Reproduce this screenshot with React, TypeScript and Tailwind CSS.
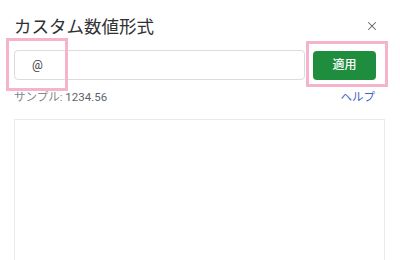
import { X } from "lucide-react";

export default function App() {
  return (
    <div
      className="relative w-[400px] h-[260px] overflow-hidden bg-white pl-[14px] pr-[15px] pt-[14px]"
      style={{ fontFamily: 'Roboto, "Noto Sans CJK JP", sans-serif' }}
    >
      {/* header */}
      <div className="flex items-center justify-between h-[26px]">
        <h1 className="text-[17.5px] leading-[26px] text-[#303134]">カスタム数値形式</h1>
        <X className="w-[14px] h-[14px] mr-[6px] -mt-[2px] text-[#5f6368]" strokeWidth={1.8} />
      </div>

      {/* input row */}
      <div className="flex items-center gap-[8px] mt-[10px]">
        <div className="flex-1 h-[30px] border border-[#dadce0] rounded-[4px] flex items-center pl-[17px] text-[12px] text-[#3c4043]">
          @
        </div>
        <button className="w-[63px] h-[29px] mr-[9px] rounded-[4px] bg-[#1e8e3e] text-white text-[12px] font-medium">
          適用
        </button>
      </div>

      {/* sample row */}
      <div className="flex items-center justify-between mt-[10px] h-[16px] text-[11.5px]">
        <span className="text-[#80868b]">
          サンプル: <span className="text-[#5f6368]">1234.56</span>
        </span>
        <span className="text-[#3b65c4] mr-[10px]">ヘルプ</span>
      </div>

      {/* list box */}
      <div className="mt-[13px] h-[160px] border border-[#e8eaed]" />

      {/* annotation highlights */}
      <div className="absolute left-[6px] top-[38px] w-[62px] h-[53px] border-[3px] border-[#f5b3cc]" />
      <div className="absolute left-[306px] top-[41px] w-[82px] h-[46px] border-[3px] border-[#f5b3cc]" />
    </div>
  );
}
